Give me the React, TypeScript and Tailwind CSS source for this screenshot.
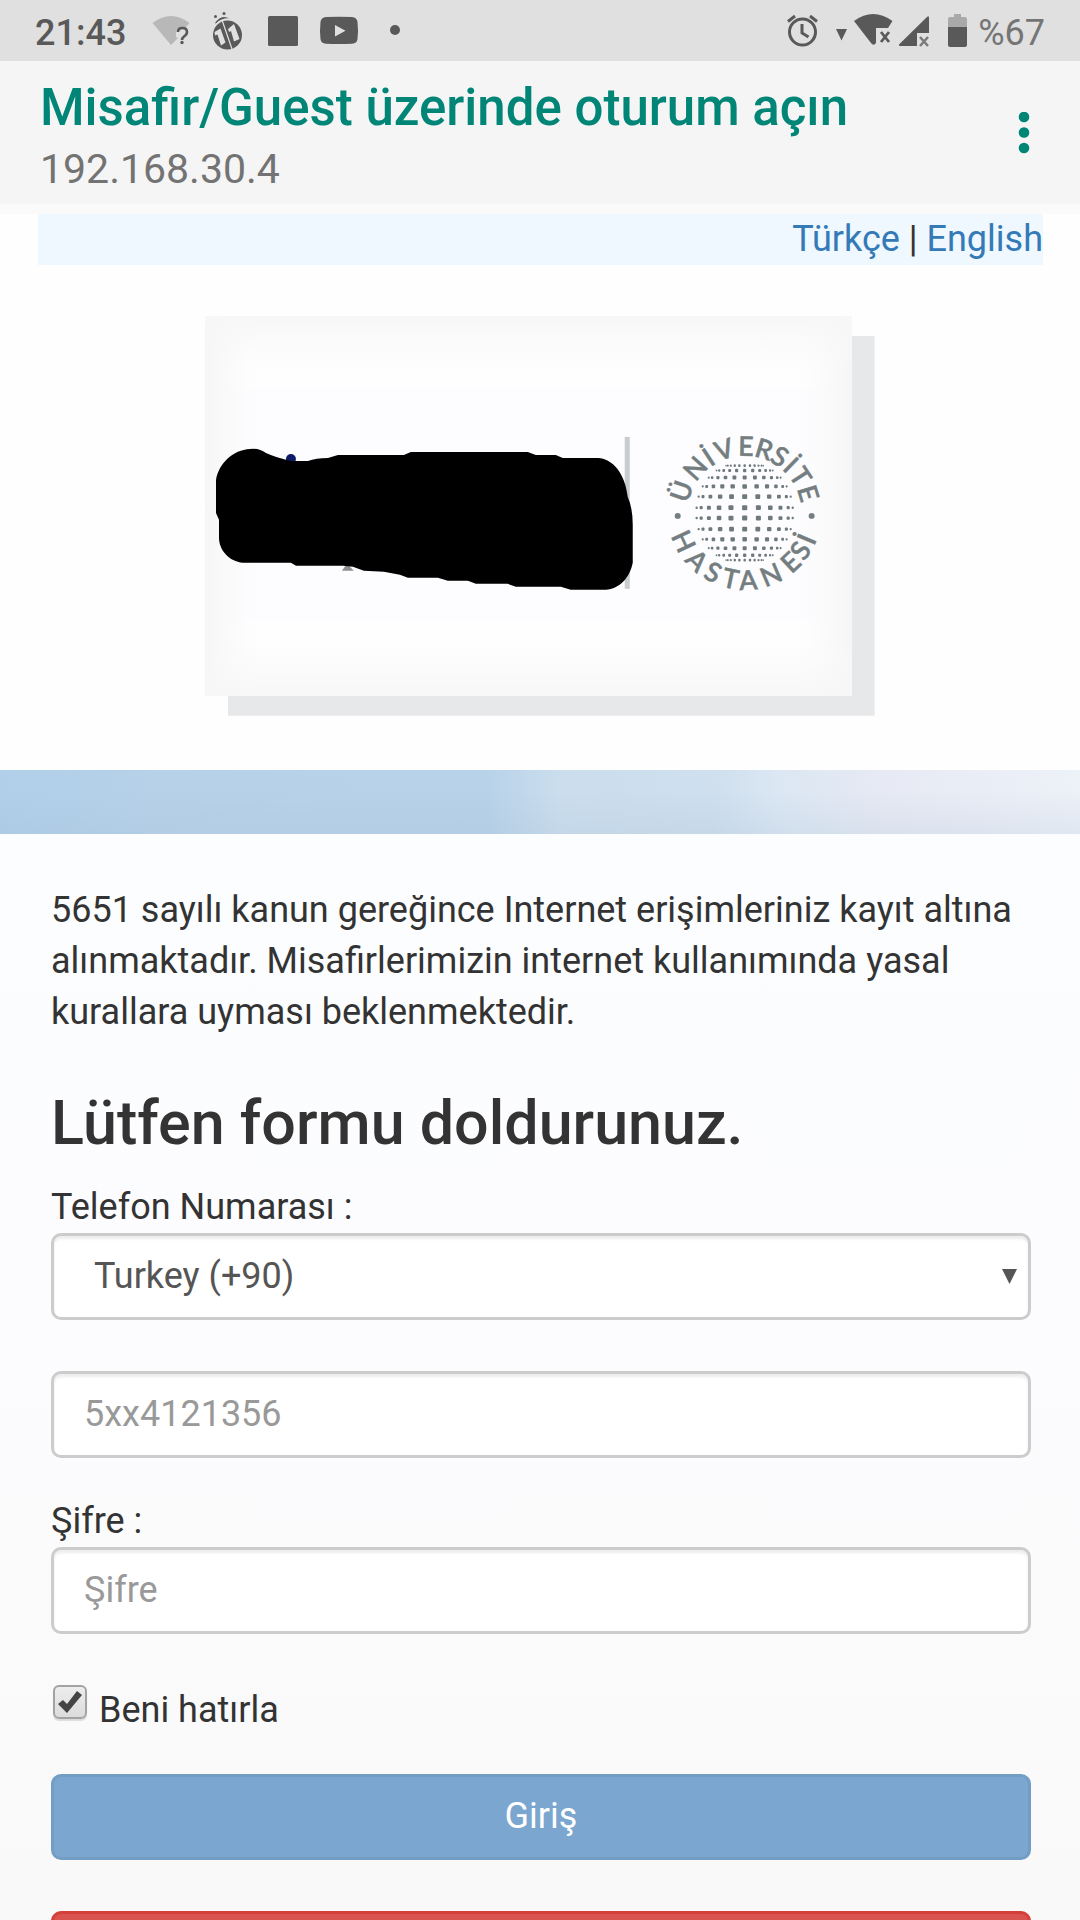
import React, { useState } from "react";

interface SealLetter {
  char: string;
  angle: number;
}

const topLetters: SealLetter[] = [
  { char: "Ü", angle: -71 },
  { char: "N", angle: -48 },
  { char: "İ", angle: -33 },
  { char: "V", angle: -18 },
  { char: "E", angle: 1 },
  { char: "R", angle: 17 },
  { char: "S", angle: 32 },
  { char: "İ", angle: 44 },
  { char: "T", angle: 57 },
  { char: "E", angle: 73 },
];

const bottomLetters: SealLetter[] = [
  { char: "H", angle: 65 },
  { char: "A", angle: 45 },
  { char: "S", angle: 28 },
  { char: "T", angle: 12 },
  { char: "A", angle: -3 },
  { char: "N", angle: -23 },
  { char: "E", angle: -43 },
  { char: "S", angle: -56 },
  { char: "İ", angle: -67 },
];

const meridians = [-75, -61, -46, -31, -16, 0, 16, 31, 46, 61, 75];
const parallels = [-71, -58, -45, -32, -19, -6, 6, 19, 32, 45, 58, 71];
const rad = Math.PI / 180;

const GlobeDots: React.FC = () => (
  <g fill="#6f787b">
    {parallels.map((lat) =>
      meridians.map((lng) => {
        const x = 50 * Math.sin(lng * rad) * Math.pow(Math.cos(lat * rad), 0.85);
        const y = 50 * Math.sin(lat * rad);
        const depth = Math.cos(lng * rad) * Math.cos(lat * rad);
        const w = 1.2 + 4 * depth;
        const h = 1.6 + 3.4 * depth;
        return (
          <rect key={`${lat}/${lng}`} x={x - w / 2} y={y - h / 2} width={w} height={h} rx="1" />
        );
      })
    )}
  </g>
);

const HospitalLogo: React.FC = () => (
  <svg viewBox="0 0 670 400" className="w-[62%] h-auto">
    <defs>
      <linearGradient id="fadeX">
        <stop offset="0" stopColor="#f6f6f6" />
        <stop offset="0.08" stopColor="#f8f8f8" stopOpacity="0" />
        <stop offset="0.92" stopColor="#f8f8f8" stopOpacity="0" />
        <stop offset="1" stopColor="#f6f6f6" />
      </linearGradient>
      <linearGradient id="fadeY" x2="0" y2="1">
        <stop offset="0" stopColor="#f7f7f7" />
        <stop offset="0.14" stopColor="#f8f8f8" stopOpacity="0" />
        <stop offset="0.86" stopColor="#f8f8f8" stopOpacity="0" />
        <stop offset="1" stopColor="#f7f7f7" />
      </linearGradient>
    </defs>
    <rect x="23" y="20" width="647" height="380" fill="#e7e8ea" />
    <rect width="647" height="380" fill="#fefefe" />
    <rect x="21" y="72" width="606" height="234" fill="#fdfdff" />
    <rect width="647" height="380" fill="url(#fadeX)" />
    <rect width="647" height="380" fill="url(#fadeY)" />
    <rect x="420" y="121" width="5" height="152" fill="#c9cccf" />
    <circle cx="86" cy="143" r="5" fill="#0d1b66" />
    <path d="M137 255l5-7 7 7z" fill="#8b8f92" />
    <path d="M45 133Q54 132 61 137Q72 142 86 145H103Q111 142 123 142L133 139H199L206 136H323L331 139H351L358 142H394C412 144 421 163 423 181Q428 192 428 209V247C425 262 415 273 401 274H366L356 271H311L303 268H271L263 265H243L233 262H203L195 259L179 256L159 255L148 251L138 250H91L86 247H38C24 246 14 234 14 222V204L11 197V164C14 147 28 134 45 133Z" />

    {/* Round seal */}
    <g transform="translate(540 197)">
      <GlobeDots />
      <g
        fill="#747d80"
        stroke="#747d80"
        strokeWidth="0.4"
        textAnchor="middle"
        className="font-['Lato',sans-serif] text-[27px] font-semibold">
        {topLetters.map(({ char, angle }) => (
          <text key={angle} y="-57" transform={`rotate(${angle})`}>
            {char}
          </text>
        ))}
        {bottomLetters.map(({ char, angle }) => (
          <text key={angle} y="77" transform={`rotate(${angle})`}>
            {char}
          </text>
        ))}
      </g>
      <circle cx="-67" cy="3" r="3" fill="#747d80" />
      <circle cx="67" cy="3" r="3" fill="#747d80" />
    </g>
  </svg>
);

const StatusBar: React.FC = () => (
  <div className="flex items-center justify-between h-[61px] shrink-0 bg-[#e0e0e0] px-[35px] text-4xl text-[#595959]">
    <div className="flex items-center">
      <span className="pt-1 font-medium">21:43</span>
      <svg width="286" height="61" viewBox="126 0 286 61" fill="#595959">
        {/* Wifi with question mark */}
        <path d="M152.500 23Q171 9 189.500 23L186 27H180Q175 30 176 37L178 38L171 45Z" fill="#b8b8b8" />
        <path d="M178 32Q178 28 182.500 28Q187 28 187 32Q187 34.500 184 36.500Q182 38 182 40" fill="none" stroke="#595959" strokeWidth="2.600" />
        <circle cx="182" cy="42.500" r="1.700" />
        {/* Ladybug */}
        <circle cx="227.500" cy="35" r="14.500" />
        <path d="M215.500 22Q222 14 229.500 18.500Q221 18 215.500 24Z" />
        <circle cx="215.500" cy="16.500" r="1.500" />
        <circle cx="224" cy="13.500" r="1.500" />
        <path d="M216 24Q222 18 229 19" fill="none" stroke="#e0e0e0" strokeWidth="1" />
        <path d="M222 20L232 49" stroke="#e0e0e0" strokeWidth="1.200" />
        <path d="M214.500 32L220.500 28.500L225.500 42.500L221 45.500L217.500 34.500L215 35.500ZM228 29L234 24L239.500 39L234 41.500L231 31L229 32Z" fill="#e0e0e0" />
        <rect x="268" y="16" width="30" height="30" rx="1.500" />
        <path fillRule="evenodd" d="M326 17Q339 16.500 352 17Q357 17.500 357.500 22Q358.500 30.500 357.500 39Q357 43.500 352 43.700Q339 44.500 326 43.700Q321 43.500 320.500 39Q319.500 30.500 320.500 22Q321 17.500 326 17ZM335 25V36.500L345.500 30.800Z" />
        <circle cx="395" cy="30" r="5" />
      </svg>
    </div>
    <div className="flex items-center">
      <svg width="192" height="61" viewBox="786 0 192 61" fill="#595959">
        {/* Alarm */}
        <g fill="none" stroke="#595959" strokeWidth="3">
          <circle cx="802.500" cy="32" r="13" />
          <path d="M802 24V33L808.500 37M788 21.500L795 16M817 21.500L810 16" />
        </g>
        <path d="M836 29H847L841.500 40.500Z" />
        {/* Wifi without connection */}
        <path d="M854 21Q873 7 892.500 21L888 28H876V43Q873.500 46.500 871 43Z" />
        <path d="M881 32L889 42M889 32L881 42" stroke="#595959" strokeWidth="2.800" />
        {/* Signal without connection */}
        <path d="M900 46Q898 45.500 899.500 44L927 17Q929 15 929 18V33H917V46Z" />
        <path d="M920 37L928 46M928 37L920 46" stroke="#7a7a7a" strokeWidth="2.500" />
        <path d="M948 27V19Q948 17 950 17H954V14H961V17H965Q967 17 967 19V27Z" fill="#a9a9a9" />
        <path d="M948 27H967V45Q967 47 965 47H950Q948 47 948 45Z" />
      </svg>
      <span className="pt-1 text-[#757575]">%67</span>
    </div>
  </div>
);

const fieldClass =
  "block w-full h-[87px] rounded-[10px] border-3 border-[#ccc] bg-white text-[#555] placeholder:text-[#999] shadow-[inset_0_3px_3px_rgba(0,0,0,0.075)]";

const LoginForm: React.FC = () => {
  const [remember, setRemember] = useState(true);

  return (
    <form onSubmit={(e) => e.preventDefault()}>
      <label id="phone-label" htmlFor="country" className="block">
        Telefon Numarası :
      </label>
      <div className="relative">
        <select id="country" className={`${fieldClass} appearance-none pl-10 pr-12`}>
          <option>Turkey (+90)</option>
        </select>
        <svg
          viewBox="0 0 15 15"
          className="absolute right-3.5 top-9 size-[15px] pointer-events-none"
          fill="#555">
          <path d="M0 0H15L7.500 15Z" />
        </svg>
      </div>
      <input
        type="tel"
        aria-labelledby="phone-label"
        placeholder="5xx4121356"
        className={`${fieldClass} mt-[51px] px-[30px]`}
      />

      <label htmlFor="password" className="block mt-[38px]">
        Şifre :
      </label>
      <input
        id="password"
        type="password"
        placeholder="Şifre"
        className={`${fieldClass} px-[30px]`}
      />

      <label className="flex items-start mt-[51px]">
        <span className="relative ml-0.5 mr-3">
          <input
            type="checkbox"
            checked={remember}
            onChange={(e) => setRemember(e.target.checked)}
            className="block appearance-none size-[34px] rounded-md border-2 border-[#a3a3a3] bg-linear-to-b from-[#ededed] to-[#dcdcdc] shadow-[0_2px_1px_rgba(0,0,0,0.12)]"
          />
          {remember && (
            <svg
              viewBox="0 0 34 34"
              className="absolute inset-0 size-[34px] pointer-events-none"
              fill="#444">
              <path d="M5 19L10 15L14 19L24 6L29 10L14 28Z" />
            </svg>
          )}
        </span>
        Beni hatırla
      </label>

      <button
        type="submit"
        className="block w-full h-[86px] mt-[38px] rounded-[10px] border-3 border-[#739ec4] bg-[#7aa6cf] text-white">
        Giriş
      </button>
      <button
        type="button"
        className="block w-full h-[86px] mt-[51px] rounded-[10px] border-3 border-[#d43f3a] bg-[#d9534f]"
      />
    </form>
  );
};

const App: React.FC = () => {
  return (
    <div className="flex flex-col h-screen bg-[#fefefe] font-['Roboto',sans-serif]">
      <StatusBar />

      <header className="flex items-center justify-between shrink-0 h-[143px] bg-[#f5f5f5] pl-10 pr-9">
        <div className="pt-2.5">
          <h1 className="text-[51px] leading-[62px] font-medium text-[#008577]">
            Misafir/Guest üzerinde oturum açın
          </h1>
          <p className="text-[41px] leading-[60px] text-[#737373]">192.168.30.4</p>
        </div>
        <button aria-label="Menu" className="p-2">
          <svg width="24" height="42" viewBox="0 0 24 42" fill="#008577">
            <circle cx="12" cy="5" r="5.300" />
            <circle cx="12" cy="20.500" r="5.300" />
            <circle cx="12" cy="36" r="5.300" />
          </svg>
        </button>
      </header>
      <div className="h-2.5 shrink-0 bg-[#fafafa]" />

      <main className="flex-1 overflow-y-auto [scrollbar-width:none] text-4xl leading-[51px]! text-[#333]">
        <nav className="ml-[38px] mr-[37px] h-[51px] bg-[#eff7ff] text-right">
          <a href="#tr" className="text-[#337ab7]">
            Türkçe
          </a>{" "}
          |{" "}
          <a href="#en" className="text-[#337ab7]">
            English
          </a>
        </nav>

        <div className="flex justify-center pt-[51px] pb-[54px]">
          <HospitalLogo />
        </div>

        {/* Sky strip */}
        <svg viewBox="0 0 1080 64" preserveAspectRatio="none" className="block w-full h-16">
          <defs>
            <linearGradient id="sky">
              <stop offset="0" stopColor="#b1cfea" />
              <stop offset="0.14" stopColor="#b6d1e8" />
              <stop offset="0.45" stopColor="#b8d2e9" />
              <stop offset="0.52" stopColor="#cbdeee" />
              <stop offset="0.66" stopColor="#cfdfee" />
              <stop offset="0.72" stopColor="#dbe7f3" />
              <stop offset="0.82" stopColor="#e7eaf4" />
              <stop offset="1" stopColor="#edf1f8" />
            </linearGradient>
            <linearGradient id="haze" x2="0" y2="1">
              <stop offset="0.3" stopColor="#9fb8cf" stopOpacity="0" />
              <stop offset="1" stopColor="#9fb8cf" stopOpacity="0.18" />
            </linearGradient>
          </defs>
          <rect width="1080" height="64" fill="url(#sky)" />
          <rect width="1080" height="64" fill="url(#haze)" />
        </svg>

        <section className="pl-[51px] pr-[49px] pt-[51px] pb-12 bg-linear-to-b from-[#fcfdfe] via-[#fcfcfe] via-45% to-[#f8f8f7]">
          <p>
            5651 sayılı kanun gereğince Internet erişimleriniz kayıt altına alınmaktadır.
            Misafirlerimizin internet kullanımında yasal kurallara uyması beklenmektedir.
          </p>
          <h3 className="mt-[51px] mb-[25px] text-[61px] leading-[68px] font-medium">
            Lütfen formu doldurunuz.
          </h3>
          <LoginForm />
        </section>
      </main>
    </div>
  );
};

export default App;
